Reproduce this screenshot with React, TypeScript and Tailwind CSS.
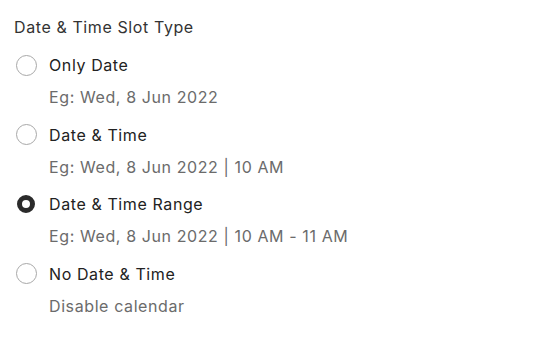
import { useState } from 'react';

const options = [
  { id: 'date', label: 'Only Date', hint: 'Eg: Wed, 8 Jun 2022' },
  { id: 'datetime', label: 'Date & Time', hint: 'Eg: Wed, 8 Jun 2022 | 10 AM' },
  { id: 'range', label: 'Date & Time Range', hint: 'Eg: Wed, 8 Jun 2022 | 10 AM - 11 AM' },
  { id: 'none', label: 'No Date & Time', hint: 'Disable calendar' },
];

export default function App() {
  const [selected, setSelected] = useState('range');

  return (
    <div className="w-[542px] h-[342px] bg-white font-['Inter',sans-serif] tracking-[0.6px] px-[14px] pt-[16px]">
      <h3 className="text-[16px] leading-[22px] text-[#333]">Date &amp; Time Slot Type</h3>
      <div className="mt-[16px] flex flex-col gap-[15.5px]">
        {options.map((o) => (
          <label key={o.id} className="flex flex-col cursor-pointer" onClick={() => setSelected(o.id)}>
            <div className="flex items-center h-[22px]">
              <div className="w-[24px] flex justify-center">
                {selected === o.id ? (
                  <span className="w-[18px] h-[18px] rounded-full border-[5px] border-[#2b2b2b] bg-white" />
                ) : (
                  <span className="w-[21px] h-[21px] rounded-full border border-[#a8a8a8] bg-white" />
                )}
              </div>
              <span className="ml-[11px] text-[16px] text-[#222]">{o.label}</span>
            </div>
            <span className="ml-[35px] mt-[10px] text-[16px] leading-[22px] text-[#6b6b6b]">{o.hint}</span>
          </label>
        ))}
      </div>
    </div>
  );
}
